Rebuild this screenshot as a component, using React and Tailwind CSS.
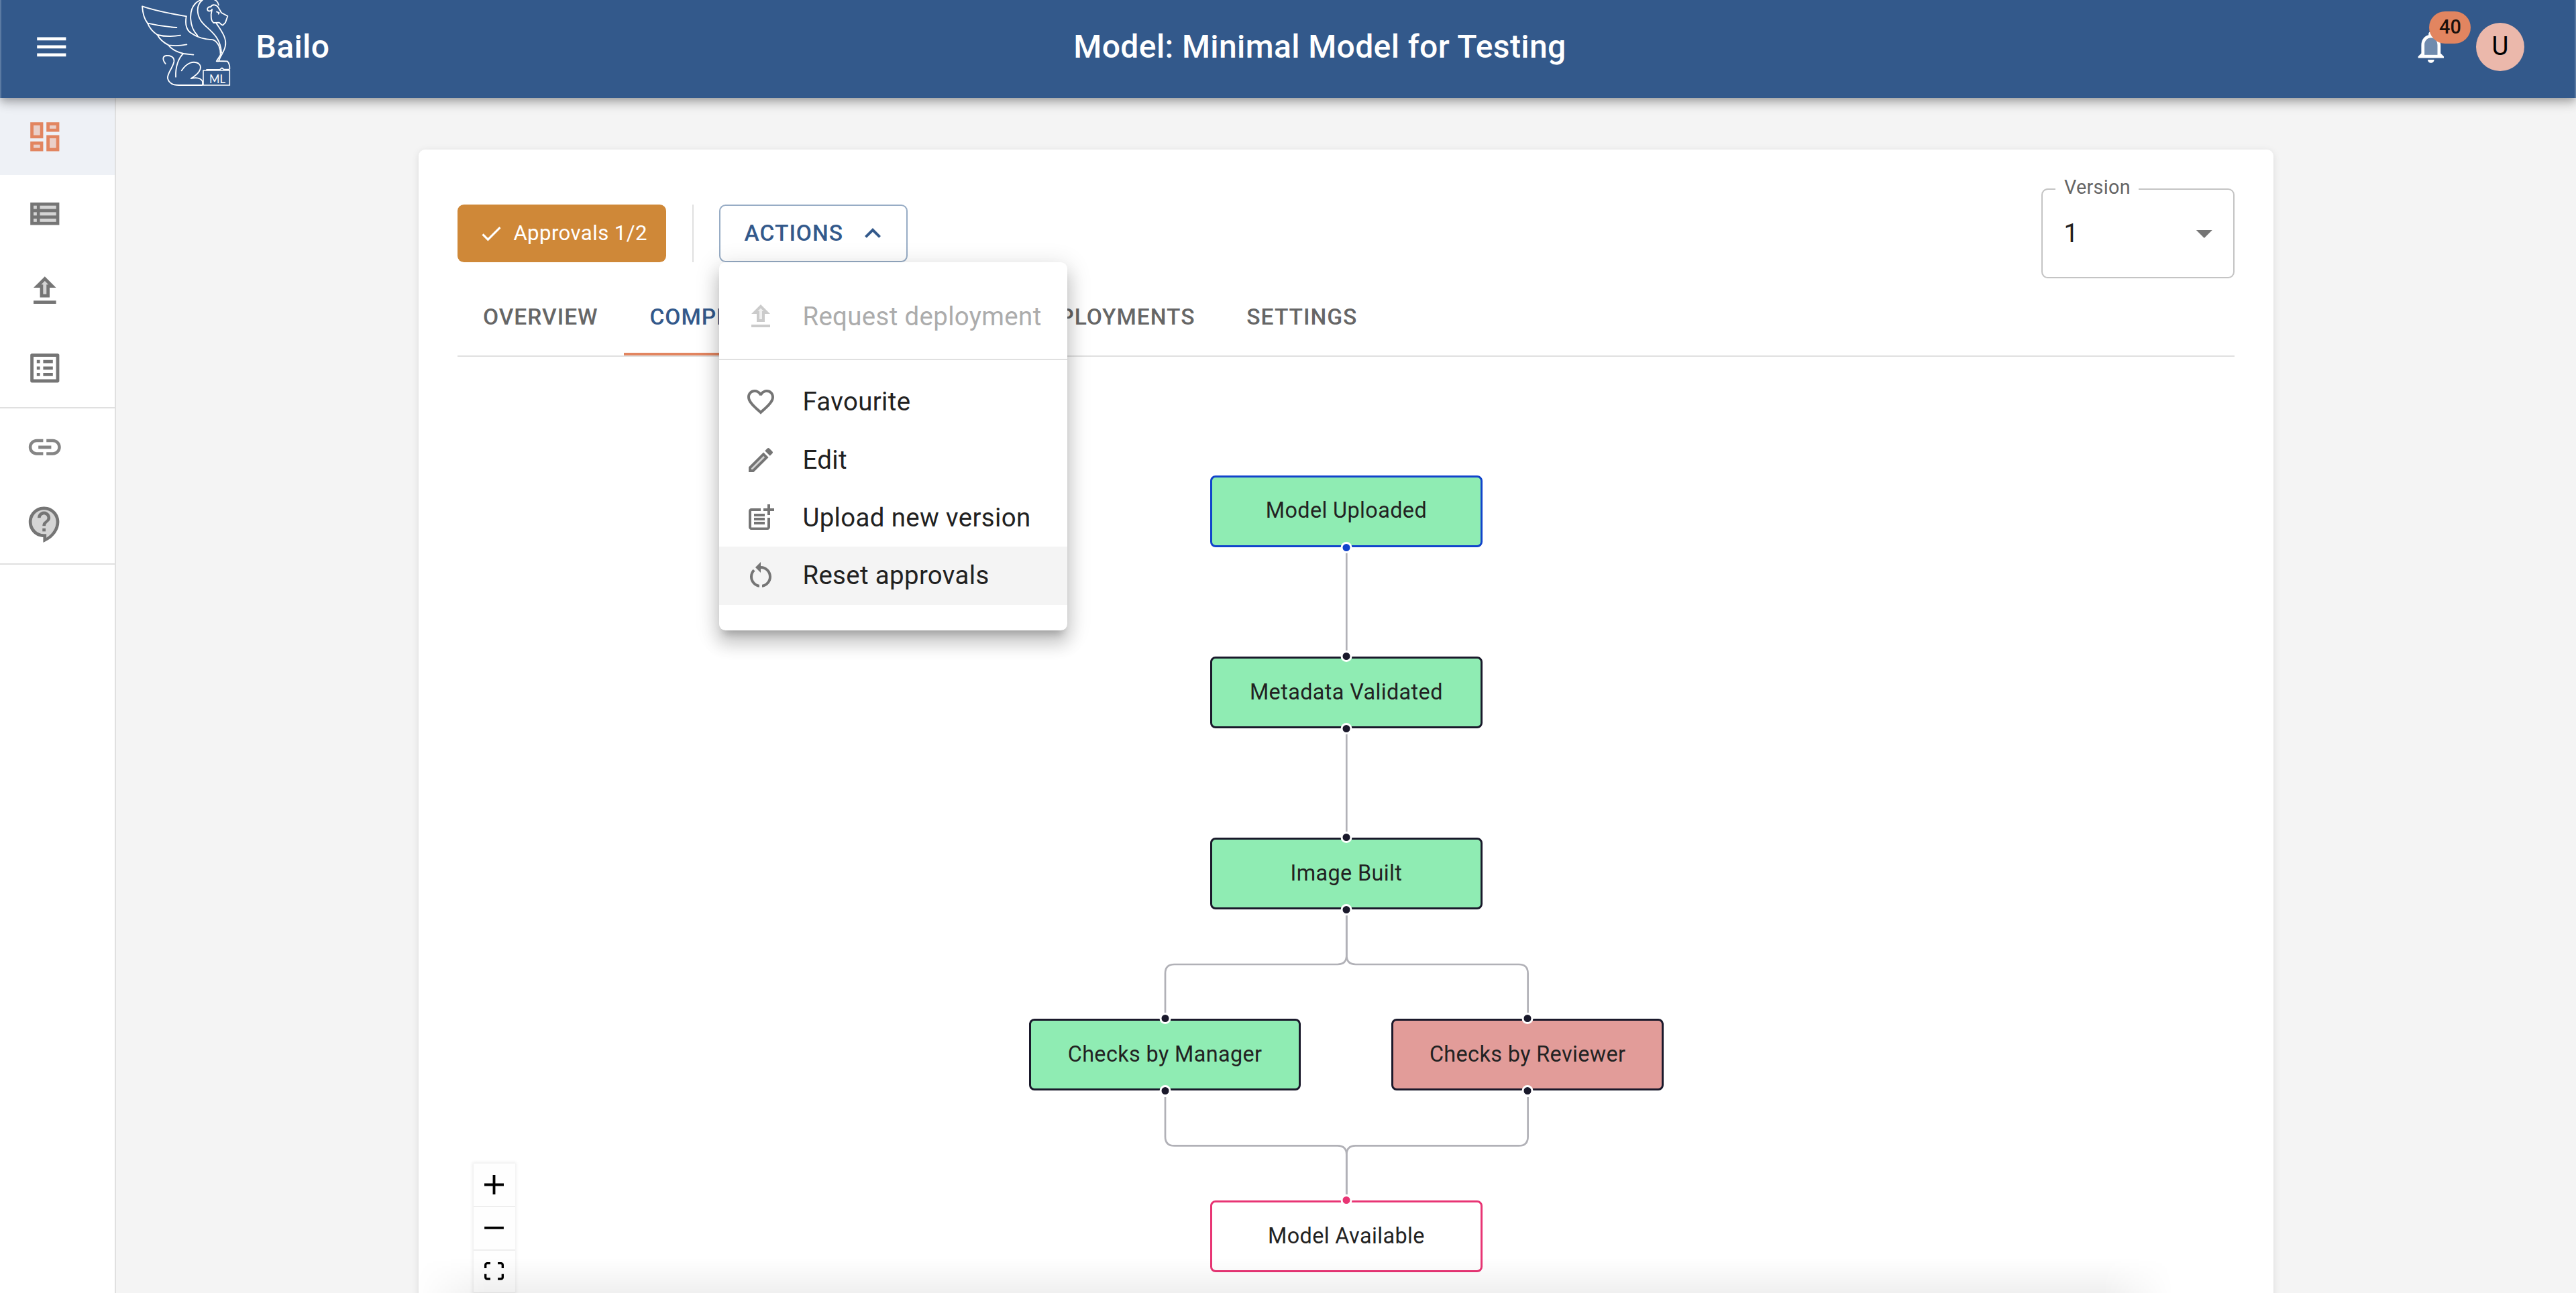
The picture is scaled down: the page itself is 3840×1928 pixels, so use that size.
const Icon = ({ size = 57.6, className = "", children, viewBox = "0 0 24 24" }) => (
  <svg width={size} height={size} viewBox={viewBox} fill="currentColor" className={`shrink-0 ${className}`}>
    {children}
  </svg>
);

const Dashboard = () => (
  <Icon className="text-[#e28560]">
    <path opacity=".3" d="M5 5h4v6H5zm10 8h4v6h-4zM5 17h4v2H5zM15 5h4v2h-4z" />
    <path d="M3 13h8V3H3v10zm2-8h4v6H5V5zm8 16h8V11h-8v10zm2-8h4v6h-4v-6zM13 3v6h8V3h-8zm6 4h-4V5h4v2zM3 21h8v-6H3v6zm2-4h4v2H5v-2z" />
  </Icon>
);

const ViewList = () => (
  <Icon>
    <path opacity=".3" d="M5 11h2v2H5zm0 4h2v2H5zm0-8h2v2H5zm4 0h10v2H9zm0 8h10v2H9zm0-4h10v2H9z" />
    <path d="M3 5v14h18V5H3zm4 12H5v-2h2v2zm0-4H5v-2h2v2zm0-4H5V7h2v2zm12 8H9v-2h10v2zm0-4H9v-2h10v2zm0-4H9V7h10v2z" />
  </Icon>
);

const Upload = ({ size, className }) => (
  <Icon size={size} className={className}>
    <path opacity=".3" d="M9.83 8H11v6h2V8h1.17L12 5.83z" />
    <path fillRule="evenodd" d="M5 18h14v2H5zM9 16h6v-6h4l-7-7-7 7h4zM12 5.83L14.17 8H13v6h-2V8H9.83z" />
  </Icon>
);

const ListAlt = () => (
  <Icon>
    <path d="M11 7h6v2h-6zm0 4h6v2h-6zm0 4h6v2h-6zM7 7h2v2H7zm0 4h2v2H7zm0 4h2v2H7zM20.1 3H3.9c-.5 0-.9.4-.9.9v16.2c0 .4.4.9.9.9h16.2c.4 0 .9-.5.9-.9V3.9c0-.5-.5-.9-.9-.9zM19 19H5V5h14v14z" />
  </Icon>
);

const LinkIcon = () => (
  <Icon className="text-[#858585]">
    <path d="M17 7h-4v1.9h4c1.71 0 3.1 1.39 3.1 3.1s-1.39 3.1-3.1 3.1h-4V17h4c2.76 0 5-2.24 5-5s-2.24-5-5-5zm-6 8.1H7c-1.71 0-3.1-1.39-3.1-3.1S5.29 8.9 7 8.9h4V7H7c-2.76 0-5 2.24-5 5s2.24 5 5 5h4v-1.9zM8 11h8v2H8z" />
  </Icon>
);

const Support = () => (
  <Icon>
    <path
      opacity=".3"
      fillRule="evenodd"
      d="M11.5 3C7.36 3 4 6.36 4 10.5S7.36 18 11.5 18H13v2.3c3.64-2.3 6-6.08 6-9.8C19 6.36 15.64 3 11.5 3zm1 13.5h-2v-2h2v2zm0-3.5h-2c0-3.25 3-3 3-5 0-1.1-.9-2-2-2s-2 .9-2 2h-2c0-2.21 1.79-4 4-4s4 1.79 4 4c0 2.5-3 2.75-3 5z"
    />
    <path
      fillRule="evenodd"
      d="M11.5 1C6.26 1 2 5.26 2 10.5c0 5.07 3.99 9.23 9 9.48v3.35l1.45-.7C17.64 20.14 21 15.38 21 10.5 21 5.26 16.74 1 11.5 1zM13 20.3V18h-1.5C7.36 18 4 14.64 4 10.5S7.36 3 11.5 3 19 6.36 19 10.5c0 3.72-2.36 7.5-6 9.8z"
    />
    <path d="M10.5 14.5h2v2h-2zM11.5 4c-2.21 0-4 1.79-4 4h2c0-1.1.9-2 2-2s2 .9 2 2c0 2-3 1.75-3 5h2c0-2.25 3-2.5 3-5 0-2.21-1.79-4-4-4z" />
  </Icon>
);

const Bell = () => (
  <Icon>
    <path opacity=".3" d="M12 6.5c-2.49 0-4 2.02-4 4.5v6h8v-6c0-2.48-1.51-4.5-4-4.5z" />
    <path d="M12 22c1.1 0 2-.9 2-2h-4c0 1.1.9 2 2 2zm6-6v-5c0-3.07-1.63-5.64-4.5-6.32V4c0-.83-.67-1.5-1.5-1.5s-1.5.67-1.5 1.5v.68C7.64 5.36 6 7.92 6 11v5l-2 2v1h16v-1l-2-2zm-2 1H8v-6c0-2.48 1.51-4.5 4-4.5s4 2.02 4 4.5v6z" />
  </Icon>
);

const Heart = () => (
  <Icon size={48}>
    <path d="M16.5 3c-1.74 0-3.41.81-4.5 2.09C10.91 3.81 9.24 3 7.5 3 4.42 3 2 5.42 2 8.5c0 3.78 3.4 6.86 8.55 11.54L12 21.35l1.45-1.32C18.6 15.36 22 12.28 22 8.5 22 5.42 19.58 3 16.5 3zm-4.4 15.55-.1.1-.1-.1C7.14 14.24 4 11.39 4 8.5 4 6.5 5.5 5 7.5 5c1.54 0 3.04.99 3.57 2.36h1.87C13.46 5.99 14.96 5 16.5 5c2 0 3.5 1.5 3.5 3.5 0 2.89-3.14 5.74-7.9 10.05z" />
  </Icon>
);

const Pencil = () => (
  <Icon size={48}>
    <path opacity=".3" d="M5 18.08V19h.92l9.06-9.06-.92-.92z" />
    <path d="M20.71 7.04c.39-.39.39-1.02 0-1.41l-2.34-2.34c-.2-.2-.45-.29-.71-.29s-.51.1-.7.29l-1.83 1.83 3.75 3.75 1.83-1.83zM3 17.25V21h3.75L17.81 9.94l-3.75-3.75L3 17.25zM5.92 19H5v-.92l9.06-9.06.92.92L5.92 19z" />
  </Icon>
);

const PostAdd = () => (
  <Icon size={48}>
    <path d="M17 19.22H5V7h7V5H5c-1.1 0-2 .9-2 2v12c0 1.1.9 2 2 2h12c1.1 0 2-.9 2-2v-7h-2v7.22z" />
    <path d="M19 2h-2v3h-3c.01.01 0 2 0 2h3v2.99c.01.01 2 0 2 0V7h3V5h-3V2zM7 9h8v2H7zM7 12v2h8v-2zM7 15h8v2H7z" />
  </Icon>
);

const Restart = () => (
  <Icon size={48}>
    <path d="M6 13c0-1.65.67-3.15 1.76-4.24L6.34 7.34C4.9 8.79 4 10.79 4 13c0 4.08 3.05 7.44 7 7.93v-2.02c-2.83-.48-5-2.94-5-5.91zm14 0c0-4.42-3.58-8-8-8-.06 0-.12.01-.18.01L12 5V2L8 6l4 4V7.01c.02 0 .04-.01.06-.01 3.28.03 5.94 2.71 5.94 6 0 2.97-2.17 5.43-5 5.91v2.02c3.95-.49 7-3.85 7-7.93z" />
  </Icon>
);

const Logo = () => (
  <svg
    width="133.4"
    height="129"
    viewBox="90 0 400 387"
    fill="none"
    stroke="#fff"
    strokeWidth="5.5"
    strokeLinejoin="round"
    strokeLinecap="round"
    className="ml-[104.6px] shrink-0 self-start"
  >
    <path d="M293 73C240 64 160 50 96 28c2 32 9 57 24 76 42 10 84 16 130 19" />
    <path d="M120 104c8 20 22 38 44 52 32 8 70 8 103 2" />
    <path d="M164 156c10 20 26 34 50 46 28 4 56 2 81-3" />
    <path d="M214 203c14 18 38 30 66 37l45 5" />
    <path d="M293 73c-5 30-3 58 20 74 28 20 60 30 100 31 24 10 34 40 33 68" />
    <path d="M343 159C306 120 302 48 334 15c9-9 20-14 32-18 30-9 66-4 72 26" />
    <path d="M366 0c-28 20-28 60-8 92 24 38 88 60 92 144" />
    <path d="M408 42c-3 7-16 11-20 3-3-8 4-16 14-14 6-13 26-12 34 2l14 24 28 15-10 29-12 12c-8-2-10-10-17-12l-24 1c-11-8-11-22-11-38z" />
    <path d="M429 53l11 4-3 5" />
    <path d="M427 104c30 42 48 72 40 104-5 24-22 42-29 65l38 1c8 6 12 22 11 34" />
    <path d="M446 246l-18 28h10" />
    <path d="M280 240c-22 18-36 60-34 104" />
    <path d="M200 285c-14-18-14-34 4-36 20-2 36 8 34 26-4 28-32 54-28 76 5 20 22 30 50 30h104" />
    <path d="M272 316c22-34 52-46 76-32 24 22-6 50-34 67 26-6 44-3 52 14v14" />
    <path d="M384 312l60-1 8-7 8 6 24 1" />
    <path d="M369 315h118v66H369z" strokeWidth="4.5" strokeLinejoin="miter" />
    <text x="396" y="371" fontSize="54" stroke="none" fill="#fff" textLength="72" lengthAdjust="spacingAndGlyphs" className="font-[Lato,sans-serif]">
      ML
    </text>
  </svg>
);

const NavItem = ({ active, children }) => (
  <div className={`flex h-[115.2px] items-center pl-[38px] ${active ? "bg-[#eef1f6]" : ""}`}>{children}</div>
);

const Tab = ({ active, children }) => (
  <div
    className={`relative flex h-[115px] items-center px-[38.4px] text-[33.6px] font-medium tracking-[0.96px] ${
      active ? "text-[#33598b]" : "text-[#666]"
    }`}
  >
    {children}
    {active && <div className="absolute inset-x-0 bottom-0 h-[4px] bg-[#e28560]" />}
  </div>
);

const MenuRow = ({ icon, hover, disabled, children }) => (
  <div
    className={`flex h-[86.4px] items-center pl-[38.4px] text-[38.4px] tracking-[0.36px] ${hover ? "bg-[#f4f4f4]" : ""} ${
      disabled ? "text-[#acacac]" : "text-[#212121]"
    }`}
  >
    <span className={`flex w-[86.4px] ${disabled ? "text-[#cbcbcb]" : "text-[#757575]"}`}>{icon}</span>
    {children}
  </div>
);

const ActionsMenu = () => (
  <div className="absolute top-full left-0 z-10 w-[519px] rounded-[9.6px] bg-white py-[38.2px] shadow-[0_12px_12px_-7.2px_rgba(0,0,0,0.2),0_19.2px_24px_2.4px_rgba(0,0,0,0.14),0_7.2px_33.6px_4.8px_rgba(0,0,0,0.12)]">
    <MenuRow disabled icon={<Upload size={48} />}>
      Request deployment
    </MenuRow>
    <div className="my-[19.2px] h-[2.4px] bg-[#e0e0e0]" />
    <MenuRow icon={<Heart />}>Favourite</MenuRow>
    <MenuRow icon={<Pencil />}>Edit</MenuRow>
    <MenuRow icon={<PostAdd />}>Upload new version</MenuRow>
    <MenuRow hover icon={<Restart />}>
      Reset approvals
    </MenuRow>
  </div>
);

/* Positions on the flow canvas, whose origin is the card's inner top-left corner. */
const nodes = [
  { label: "Model Uploaded", x: 1122.4, y: 176.6, cls: "bg-[#8fecb3] border-[#1144cb]", dot: "bg-[#1144cb]", bottom: true },
  { label: "Metadata Validated", x: 1122.4, y: 446.9, cls: "bg-[#8fecb3] border-[#1a192b]", dot: "bg-[#1a192b]", top: true, bottom: true },
  { label: "Image Built", x: 1122.4, y: 717.2, cls: "bg-[#8fecb3] border-[#1a192b]", dot: "bg-[#1a192b]", top: true, bottom: true },
  { label: "Checks by Manager", x: 852.1, y: 987.5, cls: "bg-[#8fecb3] border-[#1a192b]", dot: "bg-[#1a192b]", top: true, bottom: true },
  { label: "Checks by Reviewer", x: 1392.7, y: 987.5, cls: "bg-[#e29c99] border-[#1a192b]", dot: "bg-[#1a192b]", top: true, bottom: true },
  { label: "Model Available", x: 1122.4, y: 1257.8, cls: "bg-white border-[#e83574]", dot: "bg-[#e83574]", top: true },
];

const FlowNode = ({ n }) => (
  <div
    className={`absolute flex h-[107px] w-[405.8px] items-center justify-center rounded-[8px] border-3 pb-[1px] text-[32.4px] tracking-[0.38px] text-[#222] ${n.cls}`}
    style={{ left: n.x, top: n.y }}
  >
    {n.label}
    {n.top && <div className={`absolute -top-[12px] left-1/2 size-[17px] -translate-x-1/2 rounded-full border-3 border-white ${n.dot}`} />}
    {n.bottom && (
      <div className={`absolute -bottom-[12px] left-1/2 size-[17px] -translate-x-1/2 rounded-full border-3 border-white ${n.dot}`} />
    )}
  </div>
);

const Flow = () => (
  <div className="relative h-[1396px]">
    <svg width="2648" height="1396" viewBox="-0.6 0 2648 1396" className="absolute inset-0" fill="none" stroke="#b1b1b7" strokeWidth="2.7">
      <path d="M1324.7 292V438M1324.7 562V708" />
      <path d="M1324.7 833V892.6Q1324.7 906 1311.2 906H1067.9Q1054.4 906 1054.4 919.5V978" />
      <path d="M1324.7 833V892.6Q1324.7 906 1338.2 906H1581.5Q1595 906 1595 919.5V978" />
      <path d="M1054.4 1104V1162.9Q1054.4 1176.4 1067.9 1176.4H1311.2Q1324.7 1176.4 1324.7 1189.9V1249" />
      <path d="M1595 1104V1162.9Q1595 1176.4 1581.5 1176.4H1338.2Q1324.7 1176.4 1324.7 1189.9V1249" />
    </svg>
    {nodes.map((n) => (
      <FlowNode key={n.label} n={n} />
    ))}
    <div className="absolute top-[1203.4px] left-[24.4px] w-[62.4px] shadow-[0_0_4.8px_2.4px_rgba(0,0,0,0.08)]">
      {[
        { k: "in", vb: "0 0 32 32", h: 29, d: "M32 18.133H18.133V32h-4.266V18.133H0v-4.266h13.867V0h4.266v13.867H32z" },
        { k: "out", vb: "0 0 32 5", h: 4.5, d: "M0 0h32v4.2H0z" },
        {
          k: "fit",
          vb: "0 0 32 30",
          h: 27.2,
          d: "M3.692 4.63c0-.53.4-.938.939-.938h5.215V0H4.708C2.13 0 0 2.054 0 4.63v5.216h3.692V4.631zM27.354 0h-5.2v3.692h5.17c.53 0 .984.4.984.939v5.215H32V4.631A4.624 4.624 0 0027.354 0zm.954 24.83c0 .532-.4.94-.939.94h-5.215v3.768h5.215c2.577 0 4.631-2.13 4.631-4.707v-5.139h-3.692v5.139zm-23.677.94c-.531 0-.939-.4-.939-.94v-5.138H0v5.139c0 2.577 2.13 4.707 4.708 4.707h5.138V25.77H4.631z",
        },
      ].map((c) => (
        <div key={c.k} className="flex h-[64.6px] items-center justify-center border-b-2 border-[#eee] bg-[#fefefe]">
          <svg width="29" height={c.h} viewBox={c.vb} className="mr-[1px]">
            <path d={c.d} />
          </svg>
        </div>
      ))}
    </div>
  </div>
);

const VersionSelect = () => (
  <div className="relative flex h-[134.4px] w-[288px] items-center justify-between rounded-[9.6px] border-[2.4px] border-[#c4c4c4] pr-[14.4px] pl-[31.2px] text-[38.4px] text-[#212121]">
    <span className="absolute -top-[20px] left-[19px] flex h-[34px] w-[124px] items-center justify-center bg-white text-[28.8px] tracking-[0.27px] text-[#666]">
      Version
    </span>
    1
    <Icon className="text-[#757575]">
      <path d="m7 10 5 5 5-5z" />
    </Icon>
  </div>
);

const Header = () => (
  <header className="relative z-20 flex h-[146px] shrink-0 items-center bg-[#33598b] pb-[7px] text-white shadow-[0_4.8px_9.6px_-2.4px_rgba(0,0,0,0.2),0_9.6px_12px_rgba(0,0,0,0.14),0_2.4px_24px_rgba(0,0,0,0.12)]">
    <Icon className="ml-[48px]">
      <path d="M3 18h18v-2H3v2zm0-5h18v-2H3v2zm0-7v2h18V6H3z" />
    </Icon>
    <Logo />
    <h1 className="ml-[38px] w-[299px] text-[48px] font-medium tracking-[0.36px]">Bailo</h1>
    <h2 className="flex-1 pr-[341px] text-center text-[48px] font-medium tracking-[0.4px]">Model: Minimal Model for Testing</h2>
    <div className="flex w-[244.6px] shrink-0 items-center">
      <div className="relative">
        <Bell />
        <span className="absolute -top-[24px] left-[26px] flex h-[48px] w-[62px] items-center justify-center rounded-[24px] bg-[#e28560] text-[28.8px] font-medium text-[#1c110c]">
          40
        </span>
      </div>
      <div className="ml-[38px] flex size-[72px] items-center justify-center rounded-full bg-[#ebb8ab] text-[38.4px] text-black">U</div>
    </div>
    <div className="absolute inset-y-0 left-0 w-[2px] bg-white/20" />
    <div className="absolute inset-y-0 right-0 w-[2px] bg-white/20" />
  </header>
);

export default function App() {
  return (
    <div className="relative flex h-[1928px] w-[3840px] flex-col overflow-hidden bg-[#f4f4f4] font-[Roboto,sans-serif] leading-none">
      <Header />
      <div className="flex min-h-0 flex-1">
        <aside className="w-[173px] shrink-0 border-r-2 border-[#e0e0e0] bg-white text-[#757575]">
          <NavItem active>
            <Dashboard />
          </NavItem>
          <NavItem>
            <ViewList />
          </NavItem>
          <NavItem>
            <Upload />
          </NavItem>
          <NavItem>
            <ListAlt />
          </NavItem>
          <div className="h-[2.4px] bg-[#e0e0e0]" />
          <NavItem>
            <LinkIcon />
          </NavItem>
          <NavItem>
            <Support />
          </NavItem>
          <div className="h-[2.4px] bg-[#e0e0e0]" />
        </aside>
        <main className="flex flex-1 justify-center pt-[77px]">
          <section className="h-[1800px] w-[2765px] rounded-[9.6px] bg-white px-[57.6px] pt-[57.6px] shadow-[0_4.8px_2.4px_-2.4px_rgba(0,0,0,0.1),0_2.4px_12px_rgba(0,0,0,0.1)]">
            <div className="flex items-center">
              <div className="flex h-[86px] w-[311px] items-center rounded-[9.6px] bg-[#cf8838] pl-[31px] text-[31.2px] tracking-[0.4px] text-white">
                <Icon size={38.4} className="mr-[14.4px]">
                  <path d="M9 16.2 4.8 12l-1.4 1.4L9 19 21 7l-1.4-1.4z" />
                </Icon>
                Approvals 1/2
              </div>
              <div className="mr-[38px] ml-[39px] h-[86px] w-[2px] bg-[#e0e0e0]" />
              <div className="relative">
                <div className="flex h-[86px] w-[281px] items-center rounded-[9.6px] border-[2.4px] border-[#97acc5] pl-[36px] text-[33.6px] font-medium tracking-[0.96px] text-[#33598b]">
                  ACTIONS
                  <Icon size={48} className="ml-[20px]">
                    <path d="m12 8-6 6 1.41 1.41L12 10.83l4.59 4.58L18 14z" />
                  </Icon>
                </div>
                <ActionsMenu />
              </div>
              <div className="ml-auto">
                <VersionSelect />
              </div>
            </div>
            <nav className="flex border-b-[2.4px] border-[#e0e0e0]">
              <Tab>OVERVIEW</Tab>
              <Tab active>COMPLIANCE</Tab>
              <Tab>BUILD LOGS</Tab>
              <Tab>DEPLOYMENTS</Tab>
              <Tab>SETTINGS</Tab>
            </nav>
            <Flow />
          </section>
        </main>
      </div>
      <div className="absolute right-[600px] bottom-0 left-[620px] h-[52px] bg-linear-to-t from-black/6 to-transparent [mask-image:linear-gradient(to_right,transparent,black_4%,black_96%,transparent)]" />
    </div>
  );
}
